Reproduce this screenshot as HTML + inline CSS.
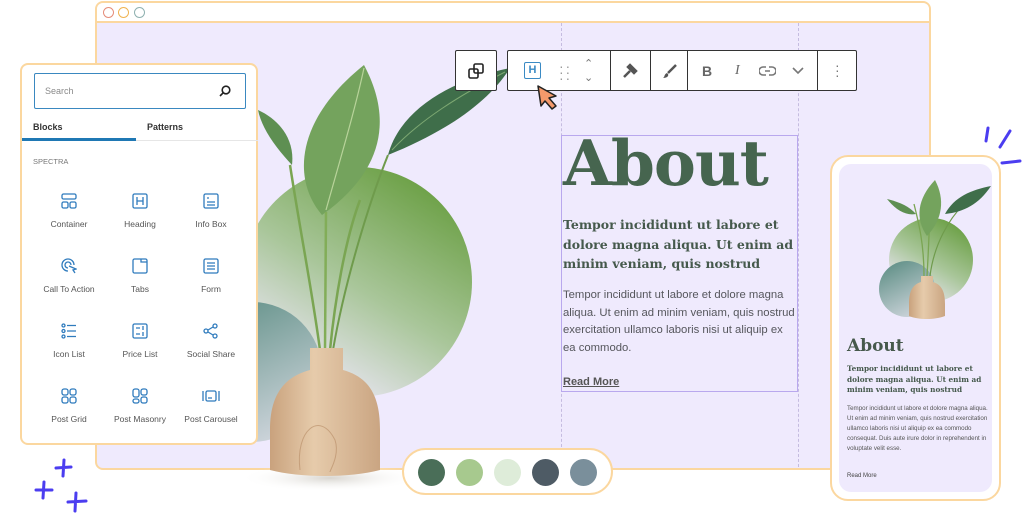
<!DOCTYPE html>
<html><head><meta charset="utf-8">
<style>
*{box-sizing:border-box;margin:0;padding:0}
body{width:1024px;height:517px;background:#fff;position:relative;overflow:hidden;font-family:"Liberation Sans",sans-serif}
.abs{position:absolute}
.win{left:95px;top:1px;width:836px;height:469px;border:2px solid #fbd79f;border-radius:8px;background:#efeafd;overflow:hidden}
.bar{left:0;top:0;width:100%;height:20px;background:#fff;border-bottom:2px solid #fbd79f}
.dot{width:11px;height:11px;border-radius:50%;border:1.6px solid;top:4px}
.panel{left:20px;top:63px;width:238px;height:382px;background:#fff;border:2px solid #fbd79f;border-radius:8px}
.search{left:12px;top:8px;width:212px;height:36px;border:1.5px solid #3a88c0;border-radius:2px;font-size:9px;color:#8a8a8a;padding:12px 0 0 10px}
.item{width:70px;text-align:center;font-size:8.5px;color:#555}
.item svg{display:block;margin:0 auto 10px}
.serif{font-family:"DejaVu Serif","Liberation Serif",serif}
.tb{background:#fff;border:1px solid #333;border-radius:2px}
.sep{top:0;width:1px;height:100%;background:#333}
.sw{width:27px;height:27px;border-radius:50%;top:9px}
</style></head><body>

<div class="abs win">
  <div class="abs bar">
    <div class="abs dot" style="left:6px;border-color:#e58d7a"></div>
    <div class="abs dot" style="left:21px;border-color:#f0b452"></div>
    <div class="abs dot" style="left:37px;border-color:#8fb1b0"></div>
  </div>
  <div class="abs" style="left:464px;top:20px;height:449px;border-left:1px dashed #c5bce0"></div>
  <div class="abs" style="left:701px;top:20px;height:449px;border-left:1px dashed #c5bce0"></div>
</div>

<svg class="abs" style="left:0;top:0" width="1024" height="517">
  <defs>
    <linearGradient id="g1" x1="0.8" y1="0.1" x2="0.3" y2="0.9">
      <stop offset="0" stop-color="#6fa24a"/><stop offset="0.55" stop-color="#a9c69a"/><stop offset="1" stop-color="#e6e4ee"/>
    </linearGradient>
    <linearGradient id="g2" x1="0.2" y1="0" x2="0.7" y2="1">
      <stop offset="0" stop-color="#5f8f86"/><stop offset="1" stop-color="#d0d6dd"/>
    </linearGradient>
    <linearGradient id="v" x1="0" y1="0" x2="1" y2="0">
      <stop offset="0" stop-color="#c9a27d"/><stop offset="0.4" stop-color="#e6cbab"/><stop offset="1" stop-color="#caa582"/>
    </linearGradient>
    <radialGradient id="sh" cx="0.5" cy="0.5" r="0.5"><stop offset="0" stop-color="#d8d5cf"/><stop offset="1" stop-color="#fff" stop-opacity="0"/></radialGradient>
  </defs>
  <circle cx="357" cy="282" r="115" fill="url(#g1)"/>
  <circle cx="252" cy="372" r="70" fill="url(#g2)"/>
  <ellipse cx="330" cy="478" rx="90" ry="14" fill="url(#sh)"/>
  <path d="M388 155 C400 110 450 80 510 68 C490 100 450 130 388 155Z" fill="#3f6e4a"/>
  <path d="M392 150 C420 120 460 95 505 72" stroke="#7da872" stroke-width="1" fill="none"/>
  <path d="M258 110 C280 120 295 140 292 165 C278 150 262 130 258 110Z" fill="#5e8f52"/>
  <path d="M322 215 C292 180 295 120 364 65 C388 110 392 165 322 215Z" fill="#74a35d"/>
  <path d="M326 210 C340 160 355 110 364 68" stroke="#b8d39a" stroke-width="1.2" fill="none"/>
  <path d="M320 350 C312 290 300 230 290 165" stroke="#7aa552" stroke-width="2.5" fill="none"/>
  <path d="M325 350 C325 300 326 250 326 212" stroke="#82ad58" stroke-width="2.5" fill="none"/>
  <path d="M330 350 C335 300 345 240 360 200" stroke="#7aa552" stroke-width="2.5" fill="none"/>
  <path d="M333 350 C345 280 370 200 388 155" stroke="#6f9b4c" stroke-width="2" fill="none"/>
  <path d="M310 348 L343 348 L343 370 C372 378 380 400 380 430 L380 470 C350 478 300 478 270 470 L270 430 C270 400 280 378 310 370Z" fill="url(#v)"/>
  <path d="M300 470 C295 430 320 410 335 440 C340 455 330 470 330 472" stroke="#b58b64" stroke-width="1" fill="none" opacity=".6"/>
</svg>

<div class="abs" style="left:561px;top:135px;width:237px;height:257px;border:1px solid #b9a8ee"></div>
<div class="abs serif" style="left:563px;top:126px;font-size:63px;font-weight:bold;color:#46654f;letter-spacing:-1px">About</div>
<div class="abs serif" style="left:563px;top:215px;width:235px;font-size:12.5px;font-weight:bold;color:#45594c;line-height:19.5px">Tempor incididunt ut labore et dolore magna aliqua. Ut enim ad minim veniam, quis nostrud</div>
<div class="abs" style="left:563px;top:287px;width:235px;font-size:11.3px;color:#55565c;line-height:17.5px">Tempor incididunt ut labore et dolore magna aliqua. Ut enim ad minim veniam, quis nostrud exercitation ullamco laboris nisi ut aliquip ex ea commodo.</div>
<div class="abs" style="left:563px;top:376px;font-size:11px;font-weight:bold;color:#555;text-decoration:underline">Read More</div>

<div class="abs tb" style="left:455px;top:50px;width:42px;height:41px">
  <svg class="abs" style="left:12px;top:12px" width="17" height="17" viewBox="0 0 17 17" fill="none" stroke="#222" stroke-width="1.6"><rect x="1" y="6" width="9" height="9" rx="1.5"/><rect x="6" y="1" width="9" height="9" rx="1.5"/></svg>
</div>
<div class="abs tb" style="left:507px;top:50px;width:350px;height:41px">
  <div class="abs" style="left:16px;top:11px;width:17px;height:17px;border:1.8px solid #3a8ac4;border-radius:2px;color:#3a8ac4;font-weight:bold;font-size:11px;text-align:center;line-height:14px">H</div>
  <div class="abs" style="left:51px;top:12px;font-size:14px;color:#999;letter-spacing:-1px;line-height:6px">· ·<br>· ·<br>· ·</div>
  <div class="abs" style="left:76px;top:6px;font-size:11px;color:#777;line-height:14px">⌃<br>⌄</div>
  <div class="abs sep" style="left:102px"></div>
  <svg class="abs" style="left:114px;top:12px" width="16" height="16" viewBox="0 0 16 16"><path d="M2 14 L8 8 M6 4 L12 10 L14 8 L8 2Z" stroke="#555" stroke-width="2.5" fill="#555"/></svg>
  <div class="abs sep" style="left:142px"></div>
  <svg class="abs" style="left:154px;top:12px" width="16" height="16" viewBox="0 0 16 16"><path d="M14 2 L6 10" stroke="#555" stroke-width="2.5"/><path d="M5 10 C2 11 3 14 1 15 C5 15 7 13 6 11Z" fill="#555"/></svg>
  <div class="abs sep" style="left:179px"></div>
  <div class="abs" style="left:194px;top:12px;font-size:14px;font-weight:bold;color:#666">B</div>
  <div class="abs" style="left:227px;top:12px;font-size:14px;font-style:italic;color:#666;font-family:'Liberation Serif',serif">I</div>
  <svg class="abs" style="left:251px;top:13px" width="17" height="14" viewBox="0 0 17 14" fill="none" stroke="#777" stroke-width="1.6"><path d="M7 3 H4 A4 4 0 0 0 4 11 H7 M10 3 H13 A4 4 0 0 1 13 11 H10 M6 7 H11"/></svg>
  <svg class="abs" style="left:284px;top:16px" width="12" height="8" viewBox="0 0 12 8" fill="none" stroke="#777" stroke-width="1.6"><path d="M1 1 L6 6 L11 1"/></svg>
  <div class="abs sep" style="left:309px"></div>
  <div class="abs" style="left:327px;top:12px;font-size:14px;color:#777;line-height:5px">·<br>·<br>·</div>
</div>
<svg class="abs" style="left:536px;top:84px" width="26" height="28" viewBox="0 0 26 28"><path d="M2 2 L20 12 L13 14 L20 22 L16 25 L9 17 L5 22Z" fill="#f4996b" stroke="#222" stroke-width="1.5" stroke-linejoin="round"/></svg>

<div class="abs panel">
  <div class="abs search">Search
    <svg class="abs" style="right:14px;top:11px" width="12" height="12" viewBox="0 0 12 12" fill="none" stroke="#222" stroke-width="1.6"><circle cx="7" cy="5" r="3.8"/><path d="M4.3 7.7 L1 11"/></svg>
  </div>
  <div class="abs" style="left:11px;top:57px;font-size:9px;font-weight:bold;color:#333">Blocks</div>
  <div class="abs" style="left:125px;top:57px;font-size:9px;font-weight:bold;color:#333">Patterns</div>
  <div class="abs" style="left:0;top:75px;width:236px;height:1px;background:#e6e6e6"></div>
  <div class="abs" style="left:0;top:73px;width:114px;height:3px;background:#1f78b4"></div>
  <div class="abs" style="left:11px;top:92px;font-size:7.5px;color:#777">SPECTRA</div>
  <div class="abs" style="left:0;top:128px;width:236px">
    <div style="display:grid;grid-template-columns:71px 71px 71px;padding-left:12px;row-gap:29px">
      <div class="item"><svg width="16" height="16" viewBox="0 0 16 16" fill="none" stroke="#2f7bbd" stroke-width="1.3"><rect x="1" y="1" width="14" height="5" rx="1.5"/><rect x="1" y="9" width="6" height="6" rx="1.5"/><rect x="9" y="9" width="6" height="6" rx="1.5"/></svg>Container</div>
      <div class="item"><svg width="16" height="16" viewBox="0 0 16 16" fill="none" stroke="#2f7bbd" stroke-width="1.3"><rect x="1" y="1" width="14" height="14" rx="1.5"/><path d="M5 4 V12 M11 4 V12 M5 8 H11"/></svg>Heading</div>
      <div class="item"><svg width="16" height="16" viewBox="0 0 16 16" fill="none" stroke="#2f7bbd" stroke-width="1.3"><rect x="1" y="1" width="14" height="14" rx="1.5"/><path d="M4 5 H6 M4 9 H12 M4 12 H12"/></svg>Info Box</div>
      <div class="item"><svg width="16" height="16" viewBox="0 0 16 16" fill="none" stroke="#2f7bbd" stroke-width="1.3"><path d="M7 13 A6 6 0 1 1 13 7"/><path d="M7 10 A3 3 0 1 1 10 7"/><path d="M8 8 L15 11 L12 12 L14 15"/></svg>Call To Action</div>
      <div class="item"><svg width="16" height="16" viewBox="0 0 16 16" fill="none" stroke="#2f7bbd" stroke-width="1.3"><rect x="1" y="1" width="14" height="14" rx="1.5"/><path d="M9 1 V4 H15"/></svg>Tabs</div>
      <div class="item"><svg width="16" height="16" viewBox="0 0 16 16" fill="none" stroke="#2f7bbd" stroke-width="1.3"><rect x="1" y="1" width="14" height="14" rx="1.5"/><path d="M4 5 H12 M4 8 H12 M4 11 H12"/></svg>Form</div>
      <div class="item"><svg width="16" height="16" viewBox="0 0 16 16" fill="none" stroke="#2f7bbd" stroke-width="1.3"><circle cx="2.5" cy="2.5" r="1.5"/><circle cx="2.5" cy="8" r="1.5"/><circle cx="2.5" cy="13.5" r="1.5"/><path d="M6 2.5 H15 M6 8 H15 M6 13.5 H15"/></svg>Icon List</div>
      <div class="item"><svg width="16" height="16" viewBox="0 0 16 16" fill="none" stroke="#2f7bbd" stroke-width="1.3"><rect x="1" y="1" width="14" height="14" rx="1.5"/><path d="M4 5 H8 M4 11 H8 M11 3 V7 M11 9 V13"/></svg>Price List</div>
      <div class="item"><svg width="16" height="16" viewBox="0 0 16 16" fill="none" stroke="#2f7bbd" stroke-width="1.3"><circle cx="12" cy="3" r="2"/><circle cx="3" cy="8" r="2"/><circle cx="12" cy="13" r="2"/><path d="M5 7 L10 4 M5 9 L10 12"/></svg>Social Share</div>
      <div class="item"><svg width="16" height="16" viewBox="0 0 16 16" fill="none" stroke="#2f7bbd" stroke-width="1.3"><rect x="1" y="1" width="6" height="6" rx="2"/><rect x="9" y="1" width="6" height="6" rx="2"/><rect x="1" y="9" width="6" height="6" rx="2"/><rect x="9" y="9" width="6" height="6" rx="2"/></svg>Post Grid</div>
      <div class="item"><svg width="16" height="16" viewBox="0 0 16 16" fill="none" stroke="#2f7bbd" stroke-width="1.3"><rect x="1" y="1" width="6" height="8" rx="2"/><rect x="9" y="1" width="6" height="6" rx="2"/><rect x="1" y="11" width="6" height="4" rx="2"/><rect x="9" y="9" width="6" height="6" rx="2"/></svg>Post Masonry</div>
      <div class="item"><svg width="18" height="16" viewBox="0 0 18 16" fill="none" stroke="#2f7bbd" stroke-width="1.3"><rect x="4" y="3" width="10" height="10" rx="1.5"/><path d="M1 3 V13 M17 3 V13 M6 10 H10"/></svg>Post Carousel</div>
    </div>
  </div>
</div>

<div class="abs" style="left:402px;top:448px;width:211px;height:47px;background:#fff;border:2px solid #fbd79f;border-radius:24px">
  <div class="abs sw" style="left:14px;background:#4a6e58"></div>
  <div class="abs sw" style="left:52px;background:#a7c98e"></div>
  <div class="abs sw" style="left:90px;background:#deecd9"></div>
  <div class="abs sw" style="left:128px;background:#4e5b65"></div>
  <div class="abs sw" style="left:166px;background:#7a8f9b"></div>
</div>

<div class="abs" style="left:830px;top:155px;width:171px;height:346px;background:#fff;border:2px solid #fbd79f;border-radius:18px">
  <div class="abs" style="left:7px;top:7px;width:153px;height:328px;background:#efeafd;border-radius:12px;overflow:hidden">
    <svg class="abs" style="left:0;top:0" width="153" height="180">
      <circle cx="92" cy="96" r="42" fill="url(#g1)"/>
      <circle cx="68" cy="125" r="28" fill="url(#g2)"/>
      <path d="M85 112 C85 80 80 60 75 40" stroke="#7aa552" stroke-width="1.3" fill="none"/>
      <path d="M88 112 C90 80 90 60 92 40" stroke="#7aa552" stroke-width="1.3" fill="none"/>
      <path d="M91 112 C95 80 110 55 125 40" stroke="#6f9b4c" stroke-width="1.2" fill="none"/>
      <path d="M88 72 C76 55 78 35 96 16 C106 35 104 55 88 72Z" fill="#74a35d"/>
      <path d="M77 50 C70 42 60 38 48 35 C56 45 66 52 77 50Z" fill="#5e8f52"/>
      <path d="M106 50 C115 33 132 26 152 22 C140 40 125 48 106 50Z" fill="#3f6e4a"/>
      <path d="M82 112 H94 V118 C104 121 106 130 106 140 V152 C95 156 80 156 70 152 V140 C70 130 72 121 82 118Z" fill="url(#v)"/>
    </svg>
    <div class="abs serif" style="left:8px;top:172px;font-size:17px;font-weight:bold;color:#46594c">About</div>
    <div class="abs serif" style="left:8px;top:200px;width:140px;font-size:7.3px;font-weight:bold;color:#45594c;line-height:10.5px">Tempor incididunt ut labore et dolore magna aliqua. Ut enim ad minim veniam, quis nostrud</div>
    <div class="abs" style="left:8px;top:240px;width:145px;font-size:6.2px;color:#555;line-height:10px">Tempor incididunt ut labore et dolore magna aliqua. Ut enim ad minim veniam, quis nostrud exercitation ullamco laboris nisi ut aliquip ex ea commodo consequat. Duis aute irure dolor in reprehendent in voluptate velit esse.</div>
    <div class="abs" style="left:8px;top:309px;font-size:6px;color:#444">Read More</div>
  </div>
</div>

<svg class="abs" style="left:980px;top:125px" width="44" height="45" fill="none" stroke="#4b3df0" stroke-width="3" stroke-linecap="round"><path d="M8 3 L6 16 M30 6 L20 22 M22 38 L40 36"/></svg>
<svg class="abs" style="left:30px;top:455px" width="65" height="62" fill="none" stroke="#4b3df0" stroke-width="3" stroke-linecap="round"><path d="M34 5 L33 21 M26 13 L41 12 M14 27 L13 43 M6 35 L22 35 M46 38 L45 56 M38 47 L56 46"/></svg>

</body></html>
